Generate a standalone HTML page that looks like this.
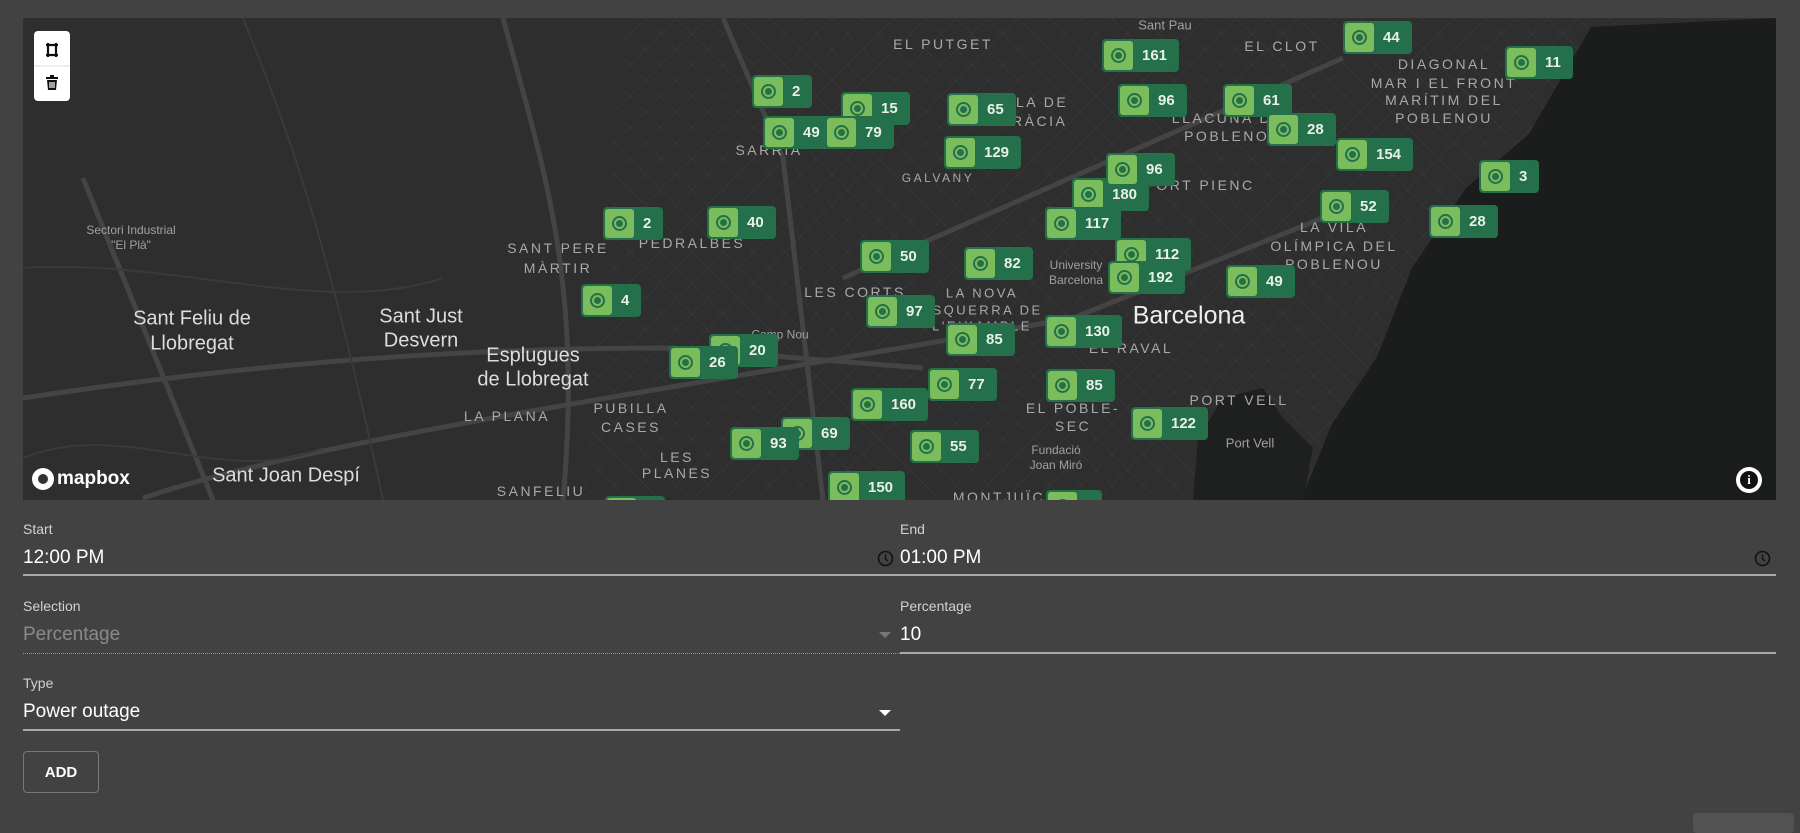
<!DOCTYPE html>
<html><head><meta charset="utf-8"><style>
body{margin:0;width:1800px;height:821px;background:#424242;font-family:"Liberation Sans",sans-serif;overflow:hidden;position:relative}
#map{position:absolute;left:23px;top:18px;width:1753px;height:482px;background:#2e2e2e;overflow:hidden}
.m{position:absolute;height:33px;background:#24704a;border-radius:4px;box-sizing:border-box;padding:2px;display:flex;align-items:center}
.m i{display:block;width:29px;height:29px;background:#7bbd5c;border-radius:3px;position:relative}
.m i:before{content:"";position:absolute;left:7px;top:7px;width:11px;height:11px;border:2px solid #24704a;border-radius:50%}
.m i:after{content:"";position:absolute;left:11px;top:11px;width:7px;height:7px;background:#24704a;border-radius:50%}
.m b{color:#e9efe9;font-size:15px;font-weight:bold;padding:0 10px 0 9px}
.l{position:absolute;transform:translate(-50%,-50%);white-space:nowrap;color:#a9a9a9;font-size:14px;letter-spacing:2.5px;text-align:center}
.c{position:absolute;transform:translate(-50%,-50%);white-space:nowrap;color:#dcdcdc;font-size:20px;font-family:"Liberation Sans Narrow","Liberation Sans",sans-serif}
.s{position:absolute;transform:translate(-50%,-50%);white-space:nowrap;color:#a0a0a0;font-size:12px;font-family:"Liberation Sans Narrow","Liberation Sans",sans-serif;text-align:center;line-height:15px}
.lab{position:absolute;color:#d2d2d2;font-size:14px}
.val{position:absolute;color:#fff;font-size:19px}
.ul{position:absolute;height:2px;background:#a8a8a8}
</style></head><body>
<div id="map">
<svg width="1753" height="482" style="position:absolute;left:0;top:0">
<defs>
<pattern id="g" width="22" height="22" patternUnits="userSpaceOnUse" patternTransform="rotate(45)"><path d="M0 0H22M0 0V22" stroke="#393939" stroke-width="1.2" fill="none"/></pattern>
</defs>
<path d="M600 0 L1600 0 L1300 482 L560 482 Z" fill="url(#g)"/>
<g stroke="#444" stroke-width="5" fill="none">
<path d="M0 380 C200 350 400 330 650 330 L900 350"/>
<path d="M120 480 C300 420 600 380 1050 300 L1300 200"/>
<path d="M480 0 C520 150 560 260 540 482"/>
<path d="M60 160 L190 482"/>
<path d="M700 0 L760 140 L800 482"/>
<path d="M820 260 L1320 40"/>
</g>
<g stroke="#3a3a3a" stroke-width="2" fill="none">
<path d="M0 250 C150 240 300 300 420 260"/>
<path d="M220 0 C260 100 300 200 360 482"/>
<path d="M0 440 C100 400 200 470 300 430"/>
</g>
<path d="M1568 9 L1753 0 L1753 482 L1278 482 L1309 406 L1354 339 L1389 250 L1443 170 L1506 116 Z" fill="#1b1c1c"/>
<path d="M1170 482 L1175 420 L1200 380 L1240 370 L1260 400 L1290 430 L1280 482 Z" fill="#1e1f1f"/>
</svg>
<div class="c" style="left:169px;top:301px">Sant Feliu de</div>
<div class="c" style="left:169px;top:326px">Llobregat</div>
<div class="c" style="left:398px;top:299px">Sant Just</div>
<div class="c" style="left:398px;top:323px">Desvern</div>
<div class="c" style="left:510px;top:338px">Esplugues</div>
<div class="c" style="left:510px;top:362px">de Llobregat</div>
<div class="c" style="left:263px;top:458px">Sant Joan Despí</div>
<div class="c" style="left:1166px;top:298px;font-size:25px;color:#eee">Barcelona</div>
<div class="s" style="left:108px;top:220px">Sectori Industrial<br>"El Plà"</div>
<div class="l" style="left:535px;top:230px">SANT PERE</div>
<div class="l" style="left:535px;top:250px">MÀRTIR</div>
<div class="l" style="left:669px;top:225px">PEDRALBES</div>
<div class="l" style="left:746px;top:132px">SARRIÀ</div>
<div class="l" style="left:832px;top:274px">LES CORTS</div>
<div class="l" style="left:484px;top:398px">LA PLANA</div>
<div class="l" style="left:608px;top:390px">PUBILLA</div>
<div class="l" style="left:608px;top:409px">CASES</div>
<div class="l" style="left:654px;top:439px">LES</div>
<div class="l" style="left:654px;top:455px">PLANES</div>
<div class="l" style="left:518px;top:473px">SANFELIU</div>
<div class="l" style="left:920px;top:26px">EL PUTGET</div>
<div class="l" style="left:1259px;top:28px">EL CLOT</div>
<div class="l" style="left:1010px;top:84px">VILA DE</div>
<div class="l" style="left:1010px;top:103px">GRÀCIA</div>
<div class="l" style="left:915px;top:160px;font-size:12px">GALVANY</div>
<div class="l" style="left:1177px;top:167px">FORT PIENC</div>
<div class="l" style="left:1421px;top:46px">DIAGONAL</div>
<div class="l" style="left:1421px;top:65px">MAR I EL FRONT</div>
<div class="l" style="left:1421px;top:82px">MARÍTIM DEL</div>
<div class="l" style="left:1421px;top:100px">POBLENOU</div>
<div class="l" style="left:1311px;top:209px">LA VILA</div>
<div class="l" style="left:1311px;top:228px">OLÍMPICA DEL</div>
<div class="l" style="left:1311px;top:246px">POBLENOU</div>
<div class="l" style="left:1210px;top:100px">LLACUNA DEL</div>
<div class="l" style="left:1210px;top:118px">POBLENOU</div>
<div class="l" style="left:959px;top:275px;font-size:13px">LA NOVA</div>
<div class="l" style="left:959px;top:292px;font-size:13px">ESQUERRA DE</div>
<div class="l" style="left:959px;top:308px;font-size:13px">L'EIXAMPLE</div>
<div class="l" style="left:1108px;top:330px">EL RAVAL</div>
<div class="l" style="left:1050px;top:390px">EL POBLE-</div>
<div class="l" style="left:1050px;top:408px">SEC</div>
<div class="l" style="left:1216px;top:382px">PORT VELL</div>
<div class="l" style="left:976px;top:479px">MONTJUÏC</div>
<div class="s" style="left:1227px;top:425px;font-size:13px">Port Vell</div>
<div class="s" style="left:1033px;top:440px">Fundació<br>Joan Miró</div>
<div class="s" style="left:1142px;top:7px;font-size:13px">Sant Pau</div>
<div class="s" style="left:757px;top:317px">Camp Nou</div>
<div class="s" style="left:1053px;top:255px">University<br>Barcelona</div>

<div class="m" style="left:729px;top:57px"><i></i><b>2</b></div>
<div class="m" style="left:818px;top:74px"><i></i><b>15</b></div>
<div class="m" style="left:740px;top:98px"><i></i><b>49</b></div>
<div class="m" style="left:802px;top:98px"><i></i><b>79</b></div>
<div class="m" style="left:924px;top:75px"><i></i><b>65</b></div>
<div class="m" style="left:1079px;top:21px"><i></i><b>161</b></div>
<div class="m" style="left:1320px;top:3px"><i></i><b>44</b></div>
<div class="m" style="left:1482px;top:28px"><i></i><b>11</b></div>
<div class="m" style="left:1095px;top:66px"><i></i><b>96</b></div>
<div class="m" style="left:1200px;top:66px"><i></i><b>61</b></div>
<div class="m" style="left:1244px;top:95px"><i></i><b>28</b></div>
<div class="m" style="left:1313px;top:120px"><i></i><b>154</b></div>
<div class="m" style="left:921px;top:118px"><i></i><b>129</b></div>
<div class="m" style="left:1049px;top:160px"><i></i><b>180</b></div>
<div class="m" style="left:1083px;top:135px"><i></i><b>96</b></div>
<div class="m" style="left:1456px;top:142px"><i></i><b>3</b></div>
<div class="m" style="left:1297px;top:172px"><i></i><b>52</b></div>
<div class="m" style="left:1406px;top:187px"><i></i><b>28</b></div>
<div class="m" style="left:1022px;top:189px"><i></i><b>117</b></div>
<div class="m" style="left:580px;top:189px"><i></i><b>2</b></div>
<div class="m" style="left:684px;top:188px"><i></i><b>40</b></div>
<div class="m" style="left:837px;top:222px"><i></i><b>50</b></div>
<div class="m" style="left:941px;top:229px"><i></i><b>82</b></div>
<div class="m" style="left:1092px;top:220px"><i></i><b>112</b></div>
<div class="m" style="left:1085px;top:243px"><i></i><b>192</b></div>
<div class="m" style="left:1203px;top:247px"><i></i><b>49</b></div>
<div class="m" style="left:558px;top:266px"><i></i><b>4</b></div>
<div class="m" style="left:843px;top:277px"><i></i><b>97</b></div>
<div class="m" style="left:1022px;top:297px"><i></i><b>130</b></div>
<div class="m" style="left:923px;top:305px"><i></i><b>85</b></div>
<div class="m" style="left:686px;top:316px"><i></i><b>20</b></div>
<div class="m" style="left:646px;top:328px"><i></i><b>26</b></div>
<div class="m" style="left:905px;top:350px"><i></i><b>77</b></div>
<div class="m" style="left:1023px;top:351px"><i></i><b>85</b></div>
<div class="m" style="left:828px;top:370px"><i></i><b>160</b></div>
<div class="m" style="left:1108px;top:389px"><i></i><b>122</b></div>
<div class="m" style="left:758px;top:399px"><i></i><b>69</b></div>
<div class="m" style="left:707px;top:409px"><i></i><b>93</b></div>
<div class="m" style="left:887px;top:412px"><i></i><b>55</b></div>
<div class="m" style="left:805px;top:453px"><i></i><b>150</b></div>
<div class="m" style="left:1023px;top:472px"><i></i><b>&nbsp;</b></div>
<div class="m" style="left:582px;top:478px;width:60px"><i></i></div>

<div style="position:absolute;left:11px;top:13px;width:36px;height:70px;background:#fff;border-radius:4px">
<svg width="36" height="70"><g stroke="#111" stroke-width="2.2" fill="none"><path d="M12 14H24M12 24H24M14 12V26M22 12V26"/></g><line x1="0" y1="35" x2="36" y2="35" stroke="#ddd"/><g fill="#111"><rect x="12" y="46" width="12" height="2"/><rect x="16" y="44" width="4" height="2"/><path d="M13 49H23L22 59H14Z"/></g><g stroke="#fff" stroke-width="1.2"><path d="M16 51V57M18 51V57M20 51V57"/></g></svg>
</div>
<div style="position:absolute;left:9px;top:450px;display:flex;align-items:center;color:#fff;font-weight:bold;font-size:19px"><span style="display:inline-block;width:22px;height:22px;border-radius:50%;background:#fff;margin-right:3px;position:relative"><span style="position:absolute;left:6px;top:6px;width:10px;height:10px;border-radius:50%;background:#333"></span></span>mapbox</div>
<div style="position:absolute;left:1713px;top:449px;width:26px;height:26px;border-radius:50%;background:#fff;display:flex;align-items:center;justify-content:center"><span style="width:18px;height:18px;border-radius:50%;background:#111;color:#fff;font-weight:bold;font-size:13px;line-height:18px;text-align:center;font-family:'Liberation Serif',serif">i</span></div>
</div>

<div class="lab" style="left:23px;top:521px">Start</div>
<div class="val" style="left:23px;top:547px">12:00 PM</div>
<svg style="position:absolute;left:877px;top:550px" width="17" height="17"><circle cx="8.5" cy="8.5" r="7" stroke="#111" stroke-width="1.6" fill="none"/><path d="M8.5 4.5V9L11 11" stroke="#111" stroke-width="1.4" fill="none"/></svg>
<div class="ul" style="left:23px;top:574px;width:877px"></div>
<div class="lab" style="left:900px;top:521px">End</div>
<div class="val" style="left:900px;top:547px">01:00 PM</div>
<svg style="position:absolute;left:1754px;top:550px" width="17" height="17"><circle cx="8.5" cy="8.5" r="7" stroke="#111" stroke-width="1.6" fill="none"/><path d="M8.5 4.5V9L11 11" stroke="#111" stroke-width="1.4" fill="none"/></svg>
<div class="ul" style="left:900px;top:574px;width:876px"></div>

<div class="lab" style="left:23px;top:598px">Selection</div>
<div class="val" style="left:23px;top:624px;color:#8a8a8a">Percentage</div>
<div style="position:absolute;left:879px;top:632px;width:0;height:0;border-left:6px solid transparent;border-right:6px solid transparent;border-top:6px solid #777"></div>
<div style="position:absolute;left:23px;top:653px;width:877px;border-top:1px dotted #999"></div>
<div class="lab" style="left:900px;top:598px">Percentage</div>
<div class="val" style="left:900px;top:624px">10</div>
<div class="ul" style="left:900px;top:652px;width:876px"></div>

<div class="lab" style="left:23px;top:675px">Type</div>
<div class="val" style="left:23px;top:701px">Power outage</div>
<div style="position:absolute;left:879px;top:710px;width:0;height:0;border-left:6px solid transparent;border-right:6px solid transparent;border-top:6px solid #fff"></div>
<div class="ul" style="left:23px;top:729px;width:877px"></div>

<div style="position:absolute;left:23px;top:751px;width:76px;height:42px;border:1px solid #777;border-radius:4px;box-sizing:border-box;color:#fff;font-size:15px;font-weight:bold;display:flex;align-items:center;justify-content:center">ADD</div>
<div style="position:absolute;left:1693px;top:813px;width:101px;height:20px;background:#525252;border-radius:4px"></div>
</body></html>
